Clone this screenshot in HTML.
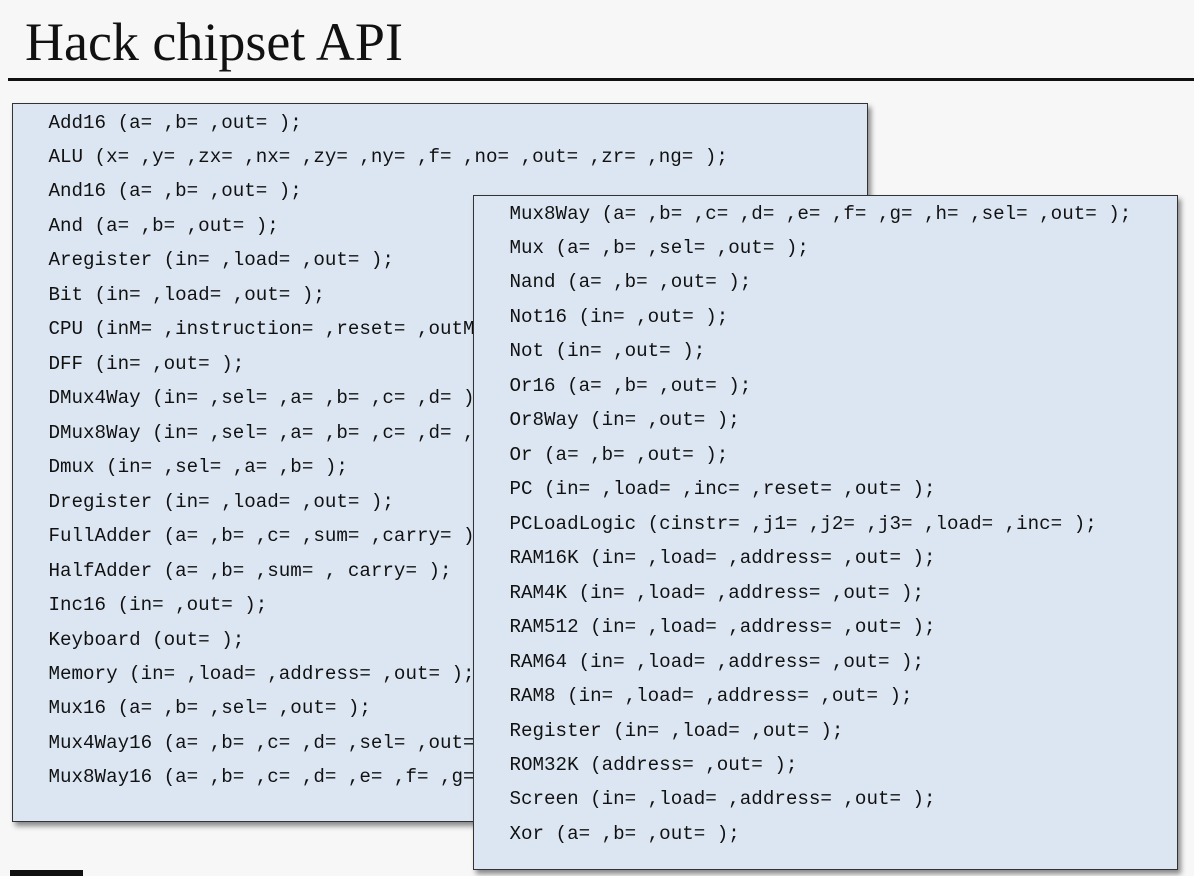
<!DOCTYPE html>
<html><head><meta charset="utf-8"><style>
html,body{margin:0;padding:0}
body{width:1194px;height:876px;background:#f7f7f7;position:relative;overflow:hidden}
.t{position:absolute;left:25px;top:9px;font-family:"Liberation Serif",serif;font-size:54px;line-height:66px;color:#111}
.rule{position:absolute;left:8px;top:78px;width:1186px;height:3px;background:#111}
.box{position:absolute;background:#dce6f2;border:1.5px solid #333;box-shadow:3px 4px 5px rgba(0,0,0,.45);box-sizing:border-box}
.box div{position:absolute;font-family:"Liberation Mono",monospace;font-size:19.2px;line-height:20px;color:#111;white-space:pre}
.blk{position:absolute;left:10px;top:870px;width:73px;height:6px;background:#111}
</style></head><body>
<div class="t">Hack chipset API</div>
<div class="rule"></div>
<div class="box" id="b1" style="left:12px;top:103px;width:856px;height:719px"></div>
<div class="box" id="b2" style="left:473px;top:195px;width:705px;height:675px"></div>
<div class="blk"></div>
<script>
var a=["Add16 (a= ,b= ,out= );","ALU (x= ,y= ,zx= ,nx= ,zy= ,ny= ,f= ,no= ,out= ,zr= ,ng= );","And16 (a= ,b= ,out= );","And (a= ,b= ,out= );","Aregister (in= ,load= ,out= );","Bit (in= ,load= ,out= );","CPU (inM= ,instruction= ,reset= ,outM= ,writeM= ,addressM= ,pc= );","DFF (in= ,out= );","DMux4Way (in= ,sel= ,a= ,b= ,c= ,d= );","DMux8Way (in= ,sel= ,a= ,b= ,c= ,d= ,e= ,f= ,g= ,h= );","Dmux (in= ,sel= ,a= ,b= );","Dregister (in= ,load= ,out= );","FullAdder (a= ,b= ,c= ,sum= ,carry= );","HalfAdder (a= ,b= ,sum= , carry= );","Inc16 (in= ,out= );","Keyboard (out= );","Memory (in= ,load= ,address= ,out= );","Mux16 (a= ,b= ,sel= ,out= );","Mux4Way16 (a= ,b= ,c= ,d= ,sel= ,out= );","Mux8Way16 (a= ,b= ,c= ,d= ,e= ,f= ,g= ,h= ,sel= ,out= );"];
var b=["Mux8Way (a= ,b= ,c= ,d= ,e= ,f= ,g= ,h= ,sel= ,out= );","Mux (a= ,b= ,sel= ,out= );","Nand (a= ,b= ,out= );","Not16 (in= ,out= );","Not (in= ,out= );","Or16 (a= ,b= ,out= );","Or8Way (in= ,out= );","Or (a= ,b= ,out= );","PC (in= ,load= ,inc= ,reset= ,out= );","PCLoadLogic (cinstr= ,j1= ,j2= ,j3= ,load= ,inc= );","RAM16K (in= ,load= ,address= ,out= );","RAM4K (in= ,load= ,address= ,out= );","RAM512 (in= ,load= ,address= ,out= );","RAM64 (in= ,load= ,address= ,out= );","RAM8 (in= ,load= ,address= ,out= );","Register (in= ,load= ,out= );","ROM32K (address= ,out= );","Screen (in= ,load= ,address= ,out= );","Xor (a= ,b= ,out= );"];
function f(id,arr,x0,y0,bx,by){var e=document.getElementById(id);arr.forEach(function(s,i){var d=document.createElement('div');d.textContent=s;d.style.left=(x0-bx)+'px';d.style.top=(y0+i*34.47-9-by)+'px';e.appendChild(d)});}
f('b1',a,49,122,13.5,104.5);
f('b2',b,510,213,474.5,196.5);
</script>
</body></html>
